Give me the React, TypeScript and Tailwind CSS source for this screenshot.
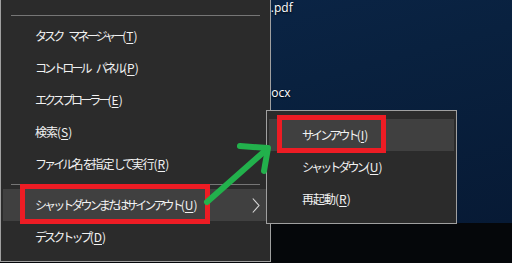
import React from "react";

function isKanji(c: string) {
  return /[\u4e00-\u9fff]/.test(c);
}

function Label({ jp, k }: { jp: string; k: string }) {
  const chars = Array.from(jp);
  return (
    <span className="whitespace-nowrap">
      {chars.map((c, i) =>
        c === " " ? (
          <span key={i} className="inline-block w-[6px]" />
        ) : (
          <span
            key={i}
            className={isKanji(c) ? "tracking-[-1px]" : "tracking-[-2.9px]"}
          >
            {c}
          </span>
        )
      )}
      <span>
        (<span className="underline decoration-1 underline-offset-[2px]">{k}</span>)
      </span>
    </span>
  );
}

function Row({
  jp,
  k,
  active,
  pl = "pl-[32px]",
  chevron,
}: {
  jp: string;
  k: string;
  active?: boolean;
  pl?: string;
  chevron?: boolean;
}) {
  return (
    <div
      className={`h-[32px] flex items-center ${pl} ${active ? "bg-[#404040]" : ""}`}
    >
      <Label jp={jp} k={k} />
      {chevron && (
        <svg className="ml-auto mr-[8px]" width="8" height="15" viewBox="0 0 8 15">
          <polyline
            points="0.8,0.5 7,7.5 0.8,14.5"
            fill="none"
            stroke="#d6d6d6"
            strokeWidth="1.1"
          />
        </svg>
      )}
    </div>
  );
}

function Sep({ pt, pb }: { pt: string; pb: string }) {
  return (
    <div className={`${pt} ${pb} px-[8px]`}>
      <div className="h-px bg-[#767676]" />
    </div>
  );
}

export default function App() {
  return (
    <div className="relative w-[512px] h-[263px] overflow-hidden flex flex-col">
      <div className="h-[223px] bg-[linear-gradient(165deg,#0b2649_0%,#09213f_45%,#071a35_100%)]" />
      <div className="flex-1 bg-[#05070a]" />

      {/* desktop labels */}
      <div className="absolute left-[264px] top-[-1px] text-[12px] text-white font-['Open_Sans','Noto_Sans',sans-serif] [text-shadow:0_1px_2px_rgba(0,0,0,0.9)]">
        2.pdf
      </div>
      <div className="absolute left-[264px] top-[84px] text-[12px] text-white font-['Open_Sans','Noto_Sans',sans-serif] [text-shadow:0_1px_2px_rgba(0,0,0,0.9)]">
        docx
      </div>

      {/* main menu */}
      <div className="absolute left-0 top-[-25px] w-[271px] border border-[#a0a0a0] bg-[#2b2b2b] px-[2px] pb-[8px] text-[12px] text-[#f2f2f2] font-['Noto_Sans_CJK_JP','Noto_Sans_CJK_SC',sans-serif]">
        <Row jp="コマンド プロンプト (管理者)" k="A" />
        <Sep pt="pt-[7px]" pb="pb-[4px]" />
        <Row jp="タスク マネージャー" k="T" />
        <Row jp="コントロール パネル" k="P" />
        <Row jp="エクスプローラー" k="E" />
        <Row jp="検索" k="S" />
        <Row jp="ファイル名を指定して実行" k="R" />
        <Sep pt="pt-[4px]" pb="pb-[4px]" />
        <Row jp="シャットダウンまたはサインアウト" k="U" active chevron />
        <Row jp="デスクトップ" k="D" />
      </div>

      {/* submenu */}
      <div className="absolute left-[266px] top-[110px] w-[191px] border border-[#a0a0a0] bg-[#2b2b2b] px-[2px] pt-[8px] pb-[8px] text-[12px] text-[#f2f2f2] font-['Noto_Sans_CJK_JP','Noto_Sans_CJK_SC',sans-serif]">
        <Row jp="サインアウト" k="I" active pl="pl-[33px]" />
        <Row jp="シャットダウン" k="U" pl="pl-[33px]" />
        <Row jp="再起動" k="R" pl="pl-[33px]" />
      </div>

      {/* red highlight boxes */}
      <div className="absolute left-[20px] top-[184px] w-[190px] h-[40px] border-[5px] border-[#ed1c24]" />
      <div className="absolute left-[277px] top-[115px] w-[109px] h-[38px] border-[5px] border-[#ed1c24]" />

      {/* green arrow */}
      <svg className="absolute inset-0 pointer-events-none" width="512" height="263" viewBox="0 0 512 263">
        <g stroke="#22b14c" strokeWidth="6" strokeLinecap="round" strokeLinejoin="round" fill="none">
          <line x1="207" y1="202" x2="266" y2="150" />
          <polyline points="240,146 268,148 264,171" />
        </g>
      </svg>
    </div>
  );
}
